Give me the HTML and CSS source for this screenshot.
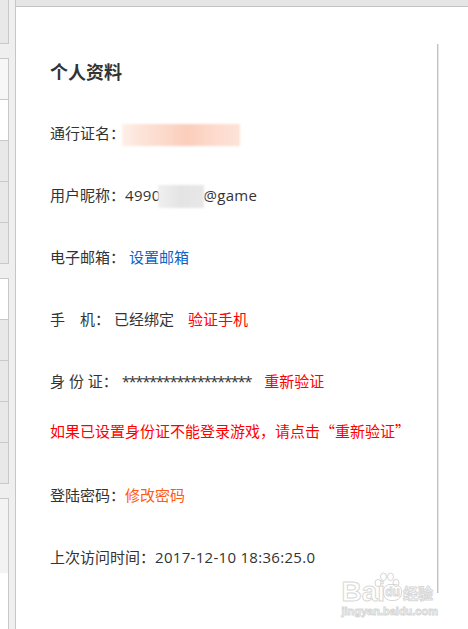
FILE: index.html
```html
<!DOCTYPE html>
<html lang="zh-CN">
<head>
<meta charset="utf-8">
<title>个人资料</title>
<link rel="stylesheet" href="styles.css">
</head>
<body>
<div class="page">
  <aside class="sidebar">
    <div class="tabs">
      <div class="tab t-gray first"></div>
      <div class="gap"></div>
      <div class="tab t-light"></div>
      <div class="tab t-white"></div>
      <div class="tab t-gray"></div>
      <div class="tab t-gray"></div>
      <div class="tab t-gray"></div>
      <div class="gap"></div>
      <div class="tab t-white"></div>
      <div class="tab t-gray"></div>
      <div class="tab t-gray"></div>
      <div class="tab t-gray"></div>
      <div class="tab t-gray"></div>
      <div class="gap"></div>
      <div class="tab t-last"></div>
    </div>
  </aside>
  <main class="main">
    <div class="topbar"></div>
    <div class="content">
      <section class="card">
        <h1 class="title">个人资料</h1>
        <div class="row">通行证名<span class="colon">：</span><span class="mask mask-pink"></span></div>
        <div class="row">用户昵称<span class="colon">：</span><span class="num">4990</span><span class="mask mask-gray"></span><span class="num">@game</span></div>
        <div class="row">电子邮箱<span class="colon">：</span> <span class="link blue">设置邮箱</span></div>
        <div class="row">手　机<span class="colon">：</span> 已经绑定<span class="link red gap-l">验证手机</span></div>
        <div class="row">身 份 证<span class="colon">：</span> <span class="stars">*******************</span><span class="link red gap-l2">重新验证</span></div>
        <div class="row notice">如果已设置身份证不能登录游戏，请点击“重新验证”</div>
        <div class="row pw">登陆密码<span class="colon">：</span><span class="link orange">修改密码</span></div>
        <div class="row">上次访问时间<span class="colon">：</span><span class="num">2017-12-10 18:36:25.0</span></div>
      </section>
      <div class="watermark">
        <div class="wm-top">
          <span class="wm-bai">Bai</span>
          <span class="wm-du">
            <svg class="paw" width="28" height="18" viewBox="0 0 28 18">
              <ellipse cx="5" cy="11" rx="3" ry="3.6" fill="#fff" stroke="#d6d6d6" stroke-width="1"/>
              <ellipse cx="10.5" cy="4.8" rx="3" ry="3.8" fill="#fff" stroke="#d6d6d6" stroke-width="1"/>
              <ellipse cx="17.5" cy="4.8" rx="3" ry="3.8" fill="#fff" stroke="#d6d6d6" stroke-width="1"/>
              <ellipse cx="23" cy="11" rx="3" ry="3.6" fill="#fff" stroke="#d6d6d6" stroke-width="1"/>
            </svg>
            <span class="du">du</span>
          </span>
          <span class="wm-jy">经验</span>
        </div>
        <div class="wm-url">jingyan.baidu.com</div>
      </div>
    </div>
  </main>
</div>
</body>
</html>
```
FILE: styles.css
```css
html, body {
  margin: 0;
  padding: 0;
  background: #ffffff;
}
.page {
  display: flex;
  width: 468px;
  height: 629px;
  overflow: hidden;
  font-family: "Open Sans", "Noto Sans CJK SC", sans-serif;
  font-size: 15px;
  color: #333333;
}
.sidebar {
  width: 15px;
  flex: none;
  background: #efefef;
  border-right: 1px solid #c6c6c6;
}
.tabs {
  display: flex;
  flex-direction: column;
  width: 9px;
  height: 100%;
}
.tab {
  box-sizing: border-box;
  width: 9px;
  height: 41px;
  border-right: 1px solid #c8c8c8;
  border-bottom: 1px solid #c8c8c8;
}
.tab.first { height: 44px; }
.gap { height: 14px; flex: none; border-bottom: 1px solid #c8c8c8; }
.t-gray { background: #e8e8e8; }
.t-light { background: #f7f7f7; }
.t-white { background: #ffffff; }
.t-last {
  flex: 1;
  border-bottom: none;
  background: linear-gradient(#f3f3f3 0, #f3f3f3 74px, #ffffff 74px);
}
.main {
  flex: 1;
  display: flex;
  flex-direction: column;
  position: relative;
}
.topbar {
  height: 6px;
  background: #e6e6e6;
  border-bottom: 1px solid #c4c4c4;
  flex: none;
}
.content {
  flex: 1;
  padding: 37px 0 0 34px;
}
.card {
  width: 387px;
  border-right: 1px solid #c2c2c2;
  box-shadow: 1px 0 0 #e6e6e6;
  padding: 17px 0 26px 0;
  display: flex;
  flex-direction: column;
  gap: 42px;
}
.title {
  margin: 0;
  font-size: 18px;
  line-height: 20px;
  font-weight: bold;
  color: #333333;
  font-family: "Noto Sans CJK SC", sans-serif;
}
.row {
  line-height: 20px;
  height: 20px;
  white-space: nowrap;
}
.colon {
  font-family: "Noto Sans CJK TC", sans-serif;
}
.num {
  letter-spacing: 0.3px;
}
.notice {
  margin-top: -12px;
  color: #ff0000;
  font-family: "Noto Sans CJK SC", sans-serif;
}
.pw { margin-top: 2px; }
.link.blue { color: #0b64c8; }
.link.red { color: #ff0000; }
.link.orange { color: #ff5a14; }
.gap-l { margin-left: 14px; }
.gap-l2 { margin-left: 13px; }
.stars { letter-spacing: -1.45px; }
.mask {
  display: inline-block;
  vertical-align: middle;
  filter: blur(1.2px);
}
.mask-pink {
  width: 118px;
  height: 22px;
  margin-left: -3px;
  background: linear-gradient(90deg, #fff0ea 0, #fde6dc 12%, #fcd7c8 40%, #fccdbb 55%, #fdd9cb 75%, #fde3d8 100%);
}
.mask-gray {
  width: 46px;
  height: 23px;
  margin-left: -3px;
  background: linear-gradient(90deg, #f0f0f0 0, #e4e4e4 50%, #e8e8e8 100%);
}
.watermark {
  position: absolute;
  right: 30px;
  bottom: 11px;
  display: flex;
  flex-direction: column;
  align-items: flex-start;
  font-family: "Liberation Sans", sans-serif;
  color: #ffffff;
  -webkit-text-stroke: 1px #d8d8d8;
}
.wm-top {
  display: flex;
  align-items: flex-end;
  height: 32px;
}
.wm-bai {
  font-size: 28px;
  font-weight: bold;
  line-height: 24px;
}
.wm-du {
  position: relative;
  width: 16px;
  height: 32px;
  display: inline-block;
}
.paw {
  position: absolute;
  left: -12px;
  top: 0;
}
.du {
  position: absolute;
  left: -2px;
  bottom: 3px;
  width: 17px;
  height: 15px;
  border: 1px solid #d6d6d6;
  border-radius: 7px 7px 8px 8px;
  font-size: 12px;
  font-weight: bold;
  line-height: 15px;
  text-align: center;
}
.wm-jy {
  font-family: "Noto Sans CJK SC", sans-serif;
  font-size: 15px;
  font-weight: bold;
  line-height: 22px;
  margin-left: 2px;
}
.wm-url {
  font-size: 11px;
  font-weight: bold;
  line-height: 13px;
  margin-top: 1px;
}
```
